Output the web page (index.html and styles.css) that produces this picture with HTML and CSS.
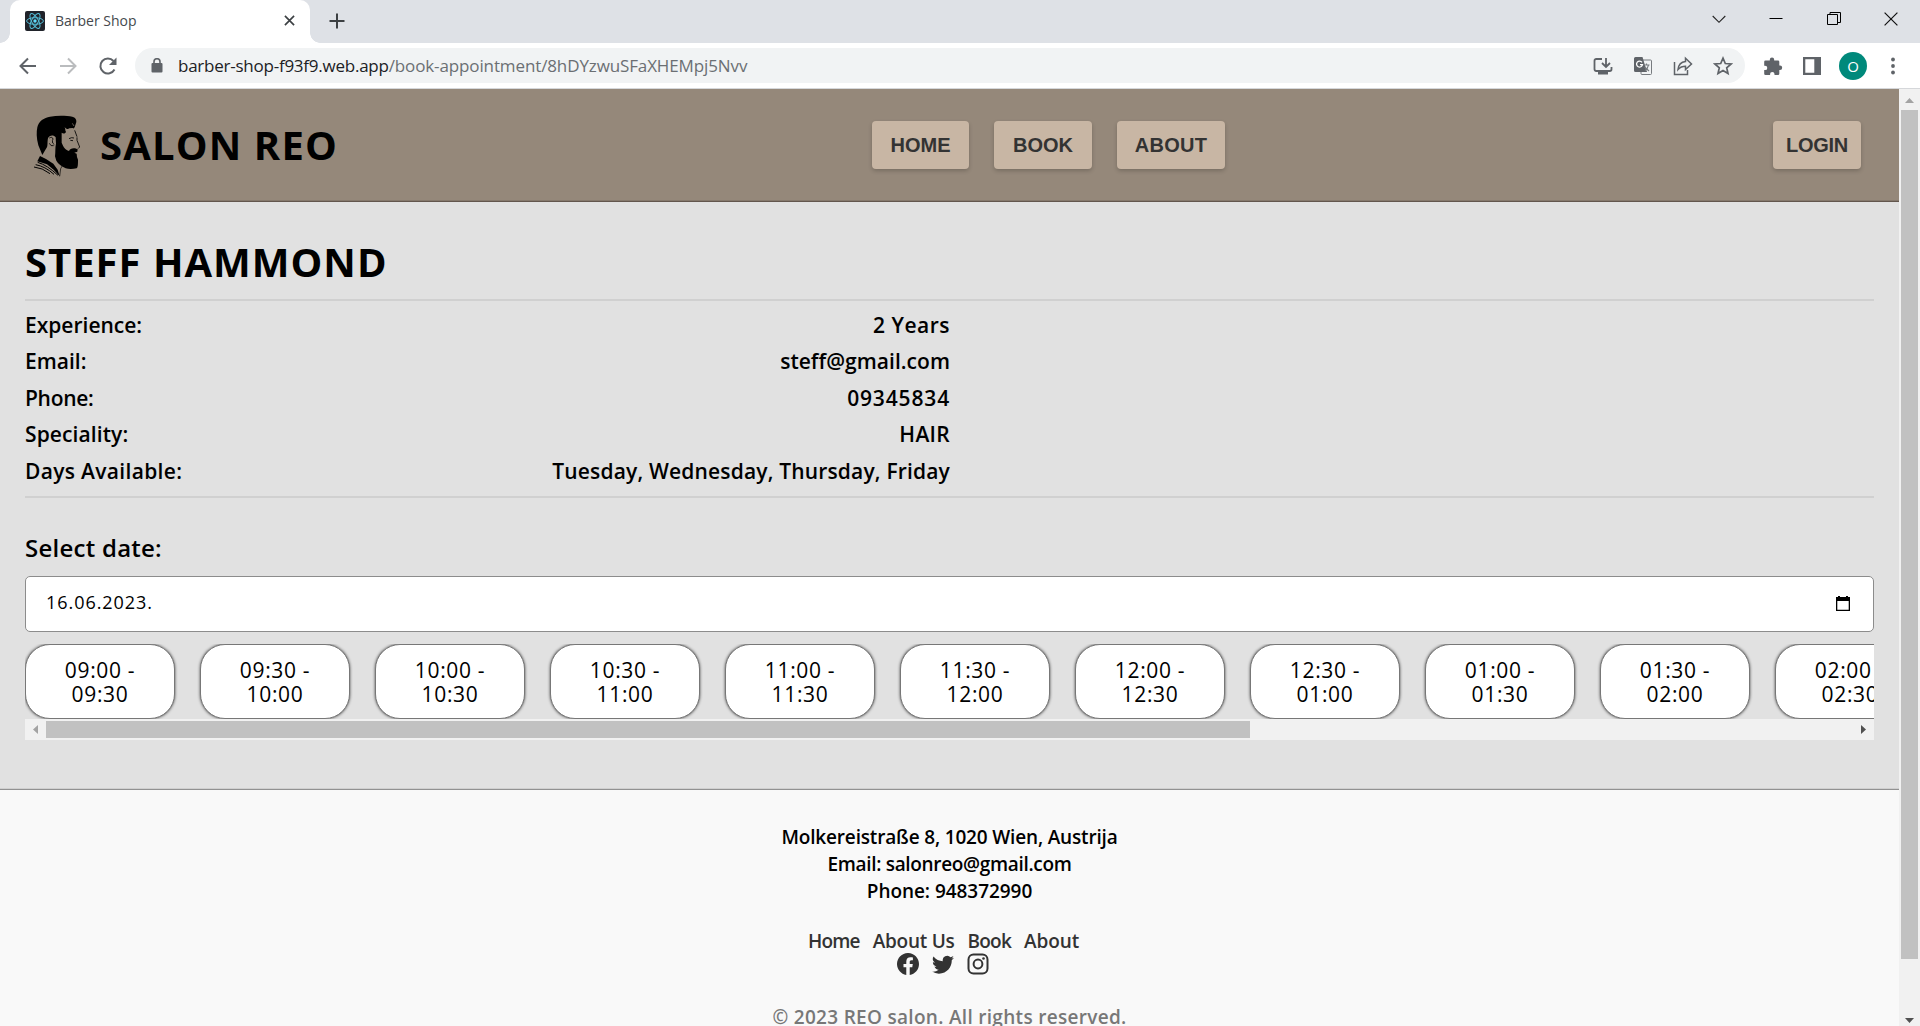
FILE: index.html
```html
<!DOCTYPE html>
<html lang="en">
<head>
<meta charset="utf-8">
<title>Barber Shop</title>
<link rel="stylesheet" href="styles.css">
</head>
<body>
<div class="browser">
  <div class="tabstrip">
    <div class="tab">
      <svg class="favicon" width="20" height="20" viewBox="0 0 20 20"><rect width="20" height="20" rx="2" fill="#20232a"/><g fill="none" stroke="#54bcd6" stroke-width="1"><ellipse cx="10" cy="10" rx="8.4" ry="3.3"/><ellipse cx="10" cy="10" rx="8.4" ry="3.3" transform="rotate(60 10 10)"/><ellipse cx="10" cy="10" rx="8.4" ry="3.3" transform="rotate(120 10 10)"/></g><circle cx="10" cy="10" r="1.7" fill="#61dafb"/></svg>
      <span class="tab-title">Barber Shop</span>
      <svg width="11" height="11" viewBox="0 0 12 12" stroke="#3c4043" stroke-width="1.8"><path d="M1 1l10 10M11 1L1 11"/></svg>
    </div>
    <svg class="new-tab" width="16" height="16" viewBox="0 0 16 16" stroke="#3c4043" stroke-width="2"><path d="M8 .5v15M.5 8h15"/></svg>
    <div class="window-controls">
      <svg width="14" height="14" viewBox="0 0 14 14" fill="none" stroke="#222" stroke-width="1.1"><path d="M.7 4l6.3 6.3L13.3 4"/></svg>
      <svg width="14" height="14" viewBox="0 0 14 14" fill="none" stroke="#000"><path d="M.5 6.5h13"/></svg>
      <svg width="14" height="14" viewBox="0 0 14 14" fill="none" stroke="#000"><path d="M.5 2.500h10v10H.5zM3 2.500V.5h10.500v10H11"/></svg>
      <svg width="14" height="14" viewBox="0 0 14 14" fill="none" stroke="#111" stroke-width="1.2"><path d="M.6.6l12.800 12.800M13.400.6L.6 13.400"/></svg>
    </div>
  </div>
  <div class="toolbar">
    <div class="nav-icons">
      <svg width="20" height="20" viewBox="0 0 20 20" fill="none" stroke="#5f6368" stroke-width="2"><path d="M18 10H3M10 2.500L2.500 10l7.500 7.500"/></svg>
      <svg width="20" height="20" viewBox="0 0 20 20" fill="none" stroke="#babcbe" stroke-width="2"><path d="M2 10h15M10 2.500l7.500 7.500-7.500 7.500"/></svg>
      <svg width="20" height="20" viewBox="0 0 20 20" fill="none" stroke="#5f6368" stroke-width="2"><path d="M16.500 13.500A7.500 7.500 0 1 1 15.500 5"/><path d="M18.500 1.500v7.500H11z" fill="#5f6368" stroke="none"/></svg>
    </div>
    <div class="omnibox">
      <svg width="12" height="15" viewBox="0 0 12 15"><rect x=".5" y="5" width="11" height="9.500" rx="1" fill="#5f6368"/><path d="M3 6V3.700a3 3 0 0 1 6 0V6" fill="none" stroke="#5f6368" stroke-width="1.600"/></svg>
      <div class="url"><span class="host">barber-shop-f93f9.web.app</span><span class="path">/book-appointment/8hDYzwuSFaXHEMpj5Nvv</span></div>
      <div class="omni-icons">
        <svg width="20" height="20" viewBox="0 0 20 20" fill="none" stroke="#5f6368" stroke-width="1.800"><path d="M9 3H3.200A1.700 1.700 0 0 0 1.500 4.700v8.600A1.700 1.700 0 0 0 3.200 15h13.600a1.700 1.700 0 0 0 1.700-1.700V11M13 2v8M9 7l4 4 4-4"/><path d="M5 15.500h10v3H5z" fill="#5f6368" stroke="none"/></svg>
        <svg width="20" height="20" viewBox="0 0 20 20"><rect x="8" y="4" width="10.500" height="14.500" rx="1" fill="#f1f3f4" stroke="#777b7f"/><path d="M2.500 1h7l4.500 15H2.500A1.500 1.500 0 0 1 1 14.500v-12A1.500 1.500 0 0 1 2.500 1z" fill="#5f6368"/><path d="M9 6.300a3 3 0 1 0 .5 2.400H7" fill="none" stroke="#fff" stroke-width="1.300"/><path d="M10.500 9h6M13.500 7.500V9M15.500 9c-.6 3-2 4.600-3.500 5.800M11.700 11l4.300 4" fill="none" stroke="#777b7f" stroke-width="1.200"/></svg>
        <svg width="20" height="20" viewBox="0 0 20 20" fill="none" stroke="#5f6368" stroke-width="1.500"><path d="M1.500 6v12.500h13V14"/><path d="M5 13.500c.5-5 3-7.500 7.500-8V2.300l6 5.700-6 5.500v-3.200c-3.500 0-5.500 1-7.500 3.200z"/></svg>
        <svg width="20" height="20" viewBox="0 0 20 20" fill="none" stroke="#5f6368" stroke-width="1.700"><path d="M10 2.200l2.300 5.300 5.800.5-4.400 3.800 1.300 5.700-5-3-5 3 1.300-5.700L1.900 8l5.800-.5z"/></svg>
      </div>
    </div>
    <svg class="puzzle" width="20" height="20" viewBox="0 0 20 20" fill="#5f6368"><path d="M2.500 4.500h4.300V3.800a2.200 2.200 0 0 1 4.400 0v.7h3.800a1.300 1.300 0 0 1 1.300 1.300v3.700h.7a2.200 2.200 0 0 1 0 4.400h-.7v3.800a1.300 1.300 0 0 1-1.300 1.300h-3.500v-.9a2.200 2.200 0 0 0-4.400 0v.9H2.500A1.300 1.300 0 0 1 1.200 17.700v-3.600h.9a2.200 2.200 0 0 0 0-4.400h-.9V5.800a1.300 1.300 0 0 1 1.300-1.300z"/></svg>
    <svg class="side-panel" width="18" height="18" viewBox="0 0 18 18"><path d="M0 0h18v18H0zM2.300 2.300v13.400h9V2.300z" fill="#5f6368" fill-rule="evenodd"/></svg>
    <span class="avatar">O</span>
    <svg class="dots" width="4" height="18" viewBox="0 0 4 18" fill="#5f6368"><circle cx="2" cy="2.500" r="1.900"/><circle cx="2" cy="9" r="1.900"/><circle cx="2" cy="15.500" r="1.900"/></svg>
  </div>
</div>

<div class="viewport">
  <div class="page">
    <header class="header">
      <div class="brand">
        <svg class="logo" width="80" height="80" viewBox="0 0 240 240">
          <path d="M67 147L55 118C49 96 49 78 52 64C56 45 72 35 90 32C112 28 140 29 157 32C166 34 170 40 169 48L165 61C163 67 160 69 158 66L148 67C144 71 139 70 134 63C137 70 135 76 138 77C137 83 129 84 125 80L125 110L128 117C132 127 139 133 147 135C150 129 155 126 165 127L173 130L172 137L163 140L170 143L171 153L174 161C174 174 174 184 170 187C158 190 146 190 137 187C125 181 114 174 109 164L105 151C107 139 105 124 108 113L107 94C101 86 88 87 84 97C81 108 85 122 78 128Z"/>
          <path d="M147 98q8-5 15-2M151 103l8 1M164 73l7 19M171 94l0 9 8 20-5 5M88 96q9-5 11 3-3 4-1 12l5 5M88 112q4 10 13 7" fill="none" stroke="#000" stroke-width="2.500"/>
          <path d="M60 150l18 9 22 14 13 18 6 20-18-20-20-16-29-9z"/>
          <path d="M53 169q28 8 61 39M47 176q28 5 55 29M42 183q25 2 48 20" fill="none" stroke="#000" stroke-width="3"/>
          <path d="M127 179l-5 9-3 23" fill="none" stroke="#000" stroke-width="2"/>
          <path d="M157 52l5 8" fill="none" stroke="#95887a" stroke-width="2"/>
        </svg>
        <span class="brand-name">SALON REO</span>
      </div>
      <nav class="nav">
        <a class="btn home">HOME</a><a class="btn book">BOOK</a><a class="btn about">ABOUT</a>
      </nav>
      <a class="btn login">LOGIN</a>
    </header>

    <main class="main">
      <h1 class="name">STEFF HAMMOND</h1>
      <div class="details">
        <div class="row"><span class="t-exp">Experience:</span><span class="t-years">2 Years</span></div>
        <div class="row"><span class="t-mail">Email:</span><span class="t-addr">steff@gmail.com</span></div>
        <div class="row"><span class="t-phone">Phone:</span><span class="t-num">09345834</span></div>
        <div class="row"><span class="t-spec">Speciality:</span><span class="t-hair">HAIR</span></div>
        <div class="row"><span class="t-days">Days Available:</span><span class="t-week">Tuesday, Wednesday, Thursday, Friday</span></div>
      </div>
      <h2 class="select-label">Select date:</h2>
      <div class="date-field">
        <span>16.06.2023.</span>
        <svg width="14" height="16" viewBox="0 0 14 16"><path d="M2 0h2v1h6V0h2v1h2v14H0V1h2zM1.300 5v8.700h11.400V5z" fill="#000" fill-rule="evenodd"/></svg>
      </div>
      <div class="slots">
        <div class="slot">09:00 -<br>09:30</div>
        <div class="slot">09:30 -<br>10:00</div>
        <div class="slot">10:00 -<br>10:30</div>
        <div class="slot">10:30 -<br>11:00</div>
        <div class="slot">11:00 -<br>11:30</div>
        <div class="slot">11:30 -<br>12:00</div>
        <div class="slot">12:00 -<br>12:30</div>
        <div class="slot">12:30 -<br>01:00</div>
        <div class="slot">01:00 -<br>01:30</div>
        <div class="slot">01:30 -<br>02:00</div>
        <div class="slot">02:00 -<br>02:30</div>
      </div>
      <div class="hscroll">
        <svg width="21" height="21" viewBox="0 0 21 21"><path d="M13 6v9l-5-4.500z" fill="#a3a3a3"/></svg>
        <div class="hthumb"></div>
        <svg class="hright" width="21" height="21" viewBox="0 0 21 21"><path d="M8 6v9l5-4.500z" fill="#505050"/></svg>
      </div>
    </main>

    <footer class="footer">
      <p class="f-street">Molkereistraße 8, 1020 Wien, Austrija</p>
      <p class="f-mail">Email: salonreo@gmail.com</p>
      <p class="f-phone">Phone: 948372990</p>
      <div class="links"><a class="l-home">Home</a><a class="l-us">About Us</a><a class="l-book">Book</a><a class="l-about">About</a></div>
      <div class="social">
        <svg width="22" height="22" viewBox="0 0 16 16" fill="#333"><path d="M16 8.049c0-4.446-3.582-8.050-8-8.050C3.580 0-.002 3.603-.002 8.050c0 4.017 2.926 7.347 6.750 7.951v-5.625h-2.030V8.050H6.750V6.275c0-2.017 1.195-3.131 3.022-3.131.876 0 1.791.157 1.791.157v1.980h-1.009c-.993 0-1.303.621-1.303 1.258v1.510h2.218l-.354 2.326H9.250V16c3.824-.604 6.750-3.934 6.750-7.951z"/></svg>
        <svg width="22" height="22" viewBox="0 0 16 16" fill="#333"><path d="M5.026 15c6.038 0 9.341-5.003 9.341-9.334 0-.14 0-.282-.006-.422A6.685 6.685 0 0 0 16 3.542a6.658 6.658 0 0 1-1.889.518 3.301 3.301 0 0 0 1.447-1.817 6.533 6.533 0 0 1-2.087.793A3.286 3.286 0 0 0 7.875 6.030a9.325 9.325 0 0 1-6.767-3.429 3.289 3.289 0 0 0 1.018 4.382A3.323 3.323 0 0 1 .640 6.575v.045a3.288 3.288 0 0 0 2.632 3.218 3.203 3.203 0 0 1-.865.115 3.230 3.230 0 0 1-.614-.057 3.283 3.283 0 0 0 3.067 2.277A6.588 6.588 0 0 1 .780 13.580a6.320 6.320 0 0 1-.780-.045A9.344 9.344 0 0 0 5.026 15z"/></svg>
        <svg width="22" height="22" viewBox="0 0 22 22" fill="none" stroke="#333" stroke-width="2"><rect x="1.500" y="1.500" width="19" height="19" rx="5"/><circle cx="11" cy="11" r="4.400"/><circle cx="16.500" cy="5.500" r="1.300" fill="#333" stroke="none"/></svg>
      </div>
      <p class="copyright">© 2023 REO salon. All rights reserved.</p>
    </footer>
  </div>
  <div class="vscroll">
    <svg width="21" height="21" viewBox="0 0 21 21"><path d="M6 14h9l-4.500-5z" fill="#a3a3a3"/></svg>
    <div class="vthumb"></div>
    <svg class="vdown" width="21" height="16" viewBox="0 0 21 16"><path d="M6 8h9l-4.500 5z" fill="#505050"/></svg>
  </div>
</div>
</body>
</html>
```
FILE: styles.css
```css
* { box-sizing: border-box; }
body { margin: 0; width: 1920px; height: 1026px; overflow: hidden; font-family: "Open Sans", "Noto Sans", sans-serif; color: #000; background: #fff; display: flex; flex-direction: column; }
svg { display: block; flex: none; }
h1, h2, p { margin: 0; }

/* Browser frame */
.browser { height: 89px; flex: none; border-bottom: 1px solid #d5d7da; }
.tabstrip { height: 43px; background: #dee1e6; display: flex; align-items: flex-start; }
.tab { width: 300px; height: 43px; margin-left: 10px; background: #fff; border-radius: 10px 10px 0 0; display: flex; align-items: center; padding: 0 15px 2px 15px; position: relative; }
.tab::before, .tab::after { content: ""; position: absolute; bottom: 0; width: 10px; height: 10px; }
.tab::before { left: -10px; background: radial-gradient(circle at 0 0, transparent 9.5px, #fff 10px); }
.tab::after { right: -10px; background: radial-gradient(circle at 100% 0, transparent 9.5px, #fff 10px); }
.tab-title { flex: 1; margin-left: 10px; font-size: 14px; color: #45494d; white-space: nowrap; }
.new-tab { margin: 13px 0 0 19px; }
.window-controls { margin: 12px 22px 0 auto; display: flex; gap: 43.500px; }
.toolbar { height: 45px; display: flex; align-items: center; }
.nav-icons { display: flex; gap: 20px; margin-left: 18px; width: 117px; }
.omnibox { width: 1610px; height: 35px; border-radius: 18px; background: #f1f3f4; display: flex; align-items: center; padding: 0 12.500px 0 16px; }
.url { margin-left: 15px; font-size: 17px; flex: 1; white-space: nowrap; }
.host { color: #202124; letter-spacing: -0.24px; }
.path { color: #6b6f73; letter-spacing: -0.12px; }
.omni-icons { display: flex; gap: 20px; }
.puzzle { margin-left: 18px; }
.side-panel { margin-left: 20px; }
.avatar { width: 28px; height: 28px; border-radius: 50%; background: #00897b; color: #fff; font-size: 15px; line-height: 28px; text-align: center; margin-left: 18px; }
.dots { margin-left: 24px; }

.viewport { flex: 1; display: flex; min-height: 0; }
.page { width: 1899px; overflow: hidden; }

/* Header */
.header { height: 113px; background: #95887a; border-bottom: 1px solid #62564d; box-shadow: inset 0 -1px 0 #85786c; display: flex; align-items: center; padding: 0 38px 0 20px; }
.brand { width: 852px; display: flex; align-items: center; }
.logo { margin-top: 1px; }
.brand-name { font-size: 40px; line-height: 48px; font-weight: 700; letter-spacing: 1.150px; margin: 0 0 1px 0; }
.nav { display: flex; gap: 25px; }
.btn { height: 48px; background: #c8b6a4; color: #333; border-radius: 4px; box-shadow: 0 2px 4px rgba(0, 0, 0, .2); font: bold 20px/48px "Liberation Sans", Arial, sans-serif; text-align: center; }
.home { width: 97px; }
.book { width: 98px; }
.about { width: 108px; letter-spacing: .3px; }
.login { width: 88px; margin-left: auto; letter-spacing: -.3px; }

/* Barber details */
.main { height: 588px; background: #e1e1e1; border-bottom: 1px solid #919191; box-shadow: inset 0 -1px 0 #cfcfcf; padding: 36px 25px 0; }
.name { font-size: 40px; line-height: 48px; font-weight: 700; letter-spacing: 1px; margin-bottom: 13px; }
.details { height: 199px; border: solid #d0d0d0; border-width: 2px 0; padding-top: 5.500px; font-size: 21px; line-height: 36.500px; font-weight: 600; }
.row { width: 925px; display: flex; justify-content: space-between; white-space: nowrap; }
.t-exp, .t-mail { letter-spacing: 0; }
.t-years { letter-spacing: .5px; }
.t-addr { letter-spacing: .04px; }
.t-phone { letter-spacing: -.3px; }
.t-spec { letter-spacing: .1px; }
.t-hair { letter-spacing: .3px; }
.t-num { letter-spacing: .850px; }
.t-days { letter-spacing: .320px; }
.t-week { letter-spacing: .17px; }
.select-label { margin-top: 35px; font-size: 24px; line-height: 30px; font-weight: 600; letter-spacing: .25px; }
.date-field { height: 56px; margin-top: 13px; padding: 0 23px 0 20px; border: 1px solid #8c8c8c; border-radius: 5px; background: #fff; display: flex; align-items: center; justify-content: space-between; font-size: 18px; letter-spacing: .950px; }
.date-field span { margin-bottom: 5px; }
.date-field svg { margin-bottom: 1px; }
.slots { margin-top: 12px; height: 75px; display: flex; gap: 25px; overflow: hidden; }
.slot { width: 150px; height: 75px; flex: none; background: #fff; border: 1px solid #777; border-radius: 25px; box-shadow: 0 0 3px #444; padding-top: 13px; font-size: 21px; line-height: 24px; letter-spacing: .650px; text-align: center; }
.hscroll { height: 21px; background: #f1f1f1; display: flex; align-items: center; }
.hthumb { width: 1204px; height: 17px; background: #c1c1c1; }
.hright { margin-left: auto; }

/* Footer */
.footer { background: #f9f9f9; padding-top: 34px; height: 236px; text-align: center; font-size: 19px; line-height: 27px; font-weight: 600; }
.f-street { letter-spacing: -.16px; }
.f-mail { letter-spacing: -.330px; }
.f-phone { letter-spacing: -.05px; }
.links { margin: 24px 12px 0 0; height: 24px; line-height: 24px; display: flex; justify-content: center; gap: 13px; color: #333; }
.l-home, .l-book { letter-spacing: -.8px; }
.l-us { letter-spacing: -.250px; }
.l-about { letter-spacing: -.1px; }
.social { display: flex; justify-content: center; gap: 13px; margin: 0 13px 0 0; }
.copyright { color: #777; letter-spacing: .3px; margin-top: 29px; }

/* Page scrollbar */
.vscroll { width: 21px; background: #f1f1f1; display: flex; flex-direction: column; align-items: center; }
.vthumb { width: 17px; height: 849px; background: #c1c1c1; }
.vdown { margin-top: auto; }
```
